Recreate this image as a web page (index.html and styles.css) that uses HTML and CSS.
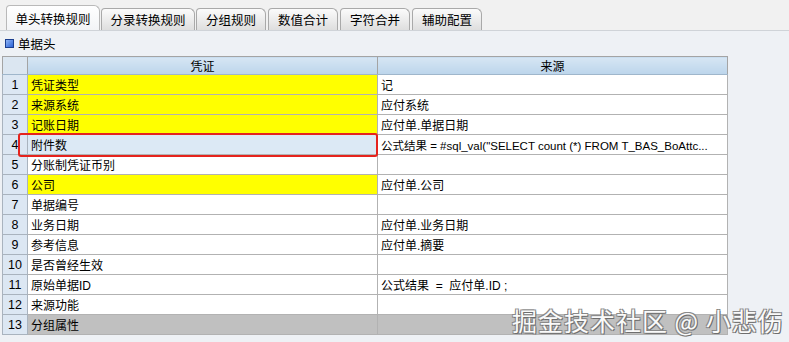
FILE: index.html
```html
<!DOCTYPE html>
<html lang="zh-CN">
<head>
  <meta charset="UTF-8" />
  <title>单头转换规则</title>
  <link rel="stylesheet" href="styles.css">
</head>
<body>
  <div class="tabs">
    <div class="tab active">单头转换规则</div>
    <div class="tab">分录转换规则</div>
    <div class="tab narrow">分组规则</div>
    <div class="tab narrow">数值合计</div>
    <div class="tab narrow">字符合并</div>
    <div class="tab narrow">辅助配置</div>
  </div>
  <div class="group-title">
    <span class="group-icon"></span>
    <span>单据头</span>
  </div>
  <div class="grid-wrap">
    <table class="grid">
      <colgroup>
        <col class="col-no">
        <col class="col-main">
        <col class="col-main">
      </colgroup>
      <thead>
        <tr><th class="corner"></th><th>凭证</th><th>来源</th></tr>
      </thead>
      <tbody>
        <tr class="must"><td class="no">1</td><td>凭证类型</td><td>记</td></tr>
        <tr class="must"><td class="no">2</td><td>来源系统</td><td>应付系统</td></tr>
        <tr class="must"><td class="no">3</td><td>记账日期</td><td>应付单.单据日期</td></tr>
        <tr class="selected"><td class="no">4</td><td>附件数</td><td class="formula">公式结果 = #sql_val("SELECT count (*) FROM T_BAS_BoAttc...</td></tr>
        <tr><td class="no">5</td><td>分账制凭证币别</td><td></td></tr>
        <tr class="must"><td class="no">6</td><td>公司</td><td>应付单.公司</td></tr>
        <tr><td class="no">7</td><td>单据编号</td><td></td></tr>
        <tr><td class="no">8</td><td>业务日期</td><td>应付单.业务日期</td></tr>
        <tr><td class="no">9</td><td>参考信息</td><td>应付单.摘要</td></tr>
        <tr><td class="no">10</td><td>是否曾经生效</td><td></td></tr>
        <tr><td class="no">11</td><td>原始单据ID</td><td>公式结果 &nbsp;= &nbsp;应付单.ID ;</td></tr>
        <tr><td class="no">12</td><td>来源功能</td><td></td></tr>
        <tr class="group"><td class="no">13</td><td>分组属性</td><td></td></tr>
      </tbody>
    </table>
    <div class="mark-box"></div>
  </div>
  <div class="watermark">掘金技术社区 @ 小悲伤</div>
</body>
</html>
```

FILE: styles.css
```css
* { margin:0; padding:0; box-sizing:border-box; }
body { width:789px; height:342px; overflow:hidden; position:relative; background:#eef1f5; font-family:"Liberation Sans","Noto Sans CJK SC",sans-serif; font-size:12px; color:#000; }

.tabs { display:flex; align-items:flex-end; height:31px; padding:0 0 0 6px; background:#f1f1f1; border-bottom:1px solid #cfd3d8; }
.tab { height:22px; width:94px; margin-right:1px; display:flex; align-items:center; justify-content:center; border:1px solid #a9a9a9; border-bottom:none; border-radius:4px 6px 0 0; background:linear-gradient(#fbfbfb,#dedede); font-size:12.5px; }
.tab.narrow { width:70px; margin-right:2px; }
.tab.active { height:25px; background:linear-gradient(#ffffff,#f3f4f6); border-color:#b9b9b9; }

.group-title { height:25px; display:flex; align-items:center; gap:4px; padding-left:5px; font-size:12.5px; }
.group-icon { width:9px; height:9px; border:1px solid #1b3f8f; background:linear-gradient(135deg,#8fb4f5,#2a62d6); }

.grid-wrap { position:relative; margin-left:2px; width:726px; }
.grid { width:726px; table-layout:fixed; border-collapse:collapse; border:1px solid #a4a4a4; background:#fff; }
.col-no { width:25px; }
.col-main { width:350px; }
.grid th { height:18px; font-weight:normal; background:linear-gradient(#d6e6f4,#bcd5eb); border:1px solid #a4a4a4; border-bottom-color:#9fb6cb; }
.grid th.corner { background:#dbe6f1; }
.grid td { height:20px; padding:0 3px; border:1px solid #b2b2b2; white-space:nowrap; overflow:hidden; }
.grid td.formula { font-size:11.5px; padding-right:0; }
.grid td.no { padding:0; text-align:center; background:#dce7f3; border-color:#a9b3be; font-size:12.5px; }
.grid tr.must td:nth-child(2) { background:#ffff00; }
.grid tr.selected td:nth-child(2) { background:#dce9f5; }
.grid tr.group td:not(.no) { background:#c0c0c0; }

.mark-box { position:absolute; left:16px; top:77px; width:360px; height:24px; border:2.5px solid #e5231d; border-radius:3px; }

.watermark { position:absolute; left:512px; top:302px; font-family:"Noto Sans CJK SC",sans-serif; font-size:25px; letter-spacing:1px; color:#fafafa; text-shadow:1px 1px 0 #6e6e6e,-1px -1px 0 #8a8a8a,1px -1px 0 #8a8a8a,-1px 1px 0 #8a8a8a; }
```
